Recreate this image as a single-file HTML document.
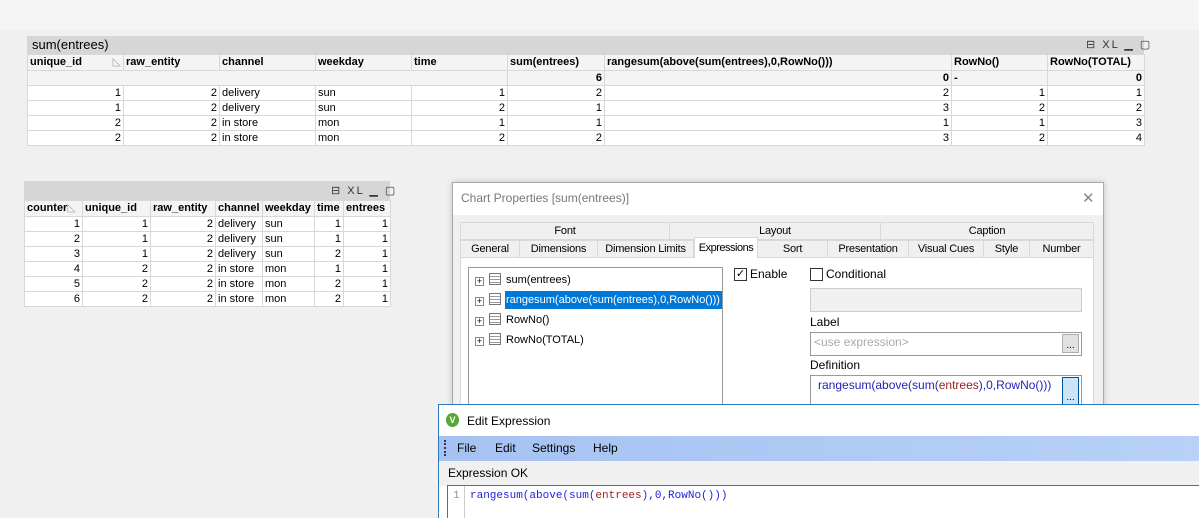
<!DOCTYPE html>
<html><head><style>
*{margin:0;padding:0;box-sizing:border-box}
body{width:1199px;height:518px;background:#f0f0f0;position:relative;overflow:hidden;font-family:"Liberation Sans",sans-serif;font-size:11px;color:#000}
.a{position:absolute}
table{border-collapse:collapse;position:absolute;table-layout:fixed;background:#fff}
td{border:1px solid #d8d8d8;height:15px;padding:0 2px;font-size:11px;white-space:nowrap;overflow:hidden;line-height:13px}
td.r{text-align:right}
tr.h td{font-weight:bold;background:#f4f4f4;height:16px}
tr.t td{background:#f4f4f4;font-weight:bold}
.cap{background:#d6d6d6}
.ic{font-size:11px;color:#333;letter-spacing:2px}
.tab{position:absolute;border:1px solid #d9d9d9;background:#f0f0f0;text-align:center;font-size:11px;line-height:17px;height:18px;color:#000;white-space:nowrap;overflow:hidden;letter-spacing:-0.2px}
.tree{font-size:11px;position:absolute;left:10px}
.pl{display:inline-block;width:9px;height:9px;border:1px solid #888;font-size:9px;line-height:7px;text-align:center;margin-right:5px;vertical-align:-1px;background:#fff}
.gi{display:inline-block;width:12px;height:12px;border:1px solid #777;background:repeating-linear-gradient(#fff 0 2px,#99a 2px 3px);margin-right:5px;vertical-align:-2px}
</style></head><body>
<div class="a" style="left:0;top:0;width:1199px;height:30px;background:#f5f5f5"></div>
<!-- top table -->
<div class="a cap" style="left:27px;top:36px;width:1117px;height:18px"></div>
<div class="a" style="left:32px;top:36px;font-size:13px;line-height:18px">sum(entrees)</div>
<div class="a ic" style="left:1086px;top:38px">⊟ XL ▁ ▢</div>
<table style="left:27px;top:54px;width:1118px">
<colgroup><col style="width:96px"><col style="width:96px"><col style="width:96px"><col style="width:96px"><col style="width:96px"><col style="width:97px"><col style="width:347px"><col style="width:96px"><col style="width:97px"></colgroup>
<tr class="h"><td>unique_id <span style="float:right;color:#aaa;font-weight:normal">◺</span></td><td>raw_entity</td><td>channel</td><td>weekday</td><td>time</td><td>sum(entrees)</td><td>rangesum(above(sum(entrees),0,RowNo()))</td><td>RowNo()</td><td>RowNo(TOTAL)</td></tr>
<tr class="t"><td colspan="5" style="border-right:1px solid #d8d8d8"></td><td class="r">6</td><td class="r">0</td><td>-</td><td class="r">0</td></tr>
<tr><td class="r">1</td><td class="r">2</td><td>delivery</td><td>sun</td><td class="r">1</td><td class="r">2</td><td class="r">2</td><td class="r">1</td><td class="r">1</td></tr>
<tr><td class="r">1</td><td class="r">2</td><td>delivery</td><td>sun</td><td class="r">2</td><td class="r">1</td><td class="r">3</td><td class="r">2</td><td class="r">2</td></tr>
<tr><td class="r">2</td><td class="r">2</td><td>in store</td><td>mon</td><td class="r">1</td><td class="r">1</td><td class="r">1</td><td class="r">1</td><td class="r">3</td></tr>
<tr><td class="r">2</td><td class="r">2</td><td>in store</td><td>mon</td><td class="r">2</td><td class="r">2</td><td class="r">3</td><td class="r">2</td><td class="r">4</td></tr>
</table>
<!-- second table -->
<div class="a cap" style="left:24px;top:181px;width:366px;height:19px"></div>
<div class="a ic" style="left:331px;top:184px">⊟ XL ▁ ▢</div>
<table style="left:24px;top:200px;width:366px">
<colgroup><col style="width:58px"><col style="width:68px"><col style="width:65px"><col style="width:47px"><col style="width:52px"><col style="width:29px"><col style="width:47px"></colgroup>
<tr class="h"><td>counter<span style="color:#aaa;font-weight:normal">◺</span></td><td>unique_id</td><td>raw_entity</td><td>channel</td><td>weekday</td><td>time</td><td>entrees</td></tr>
<tr><td class="r">1</td><td class="r">1</td><td class="r">2</td><td>delivery</td><td>sun</td><td class="r">1</td><td class="r">1</td></tr>
<tr><td class="r">2</td><td class="r">1</td><td class="r">2</td><td>delivery</td><td>sun</td><td class="r">1</td><td class="r">1</td></tr>
<tr><td class="r">3</td><td class="r">1</td><td class="r">2</td><td>delivery</td><td>sun</td><td class="r">2</td><td class="r">1</td></tr>
<tr><td class="r">4</td><td class="r">2</td><td class="r">2</td><td>in store</td><td>mon</td><td class="r">1</td><td class="r">1</td></tr>
<tr><td class="r">5</td><td class="r">2</td><td class="r">2</td><td>in store</td><td>mon</td><td class="r">2</td><td class="r">1</td></tr>
<tr><td class="r">6</td><td class="r">2</td><td class="r">2</td><td>in store</td><td>mon</td><td class="r">2</td><td class="r">1</td></tr>
</table>
<!-- chart properties dialog -->
<div class="a" style="left:452px;top:182px;width:652px;height:240px;background:#f0f0f0;border:1px solid #aaa;box-shadow:0 0 6px rgba(0,0,0,.2)"></div>
<div class="a" style="left:453px;top:183px;width:650px;height:32px;background:#fff"></div>
<div class="a" style="left:461px;top:190px;font-size:12px;color:#777;line-height:16px">Chart Properties [sum(entrees)]</div>
<div class="a" style="left:1082px;top:189px;font-size:15px;color:#888;font-weight:300">✕</div>
<div class="tab" style="left:460px;top:222px;width:210px">Font</div>
<div class="tab" style="left:669px;top:222px;width:212px">Layout</div>
<div class="tab" style="left:880px;top:222px;width:214px">Caption</div>
<div class="tab" style="left:460px;top:240px;width:60px">General</div>
<div class="tab" style="left:519px;top:240px;width:79px">Dimensions</div>
<div class="tab" style="left:597px;top:240px;width:97px">Dimension Limits</div>
<div class="tab" style="left:694px;top:237px;width:64px;height:22px;background:#fff;border-bottom:none;letter-spacing:-0.5px;line-height:21px">Expressions</div>
<div class="tab" style="left:757px;top:240px;width:71px">Sort</div>
<div class="tab" style="left:827px;top:240px;width:82px">Presentation</div>
<div class="tab" style="left:908px;top:240px;width:76px">Visual Cues</div>
<div class="tab" style="left:983px;top:240px;width:47px">Style</div>
<div class="tab" style="left:1029px;top:240px;width:65px">Number</div>
<div class="a" style="left:460px;top:258px;width:634px;height:160px;background:#fff;border:1px solid #d9d9d9;border-top:none"></div>
<div class="a" style="left:468px;top:267px;width:255px;height:150px;background:#fff;border:1px solid #999"></div>
<div class="tree" style="left:475px;top:272px;font-size:11px;line-height:16px"><span class="pl">+</span><span class="gi"></span>sum(entrees)</div>
<div class="a" style="left:505px;top:291px;width:217px;height:18px;background:#0078d7"></div>
<div class="tree" style="left:475px;top:292px;font-size:11px;line-height:16px"><span class="pl" style="color:#000">+</span><span class="gi"></span><span style="color:#fff">rangesum(above(sum(entrees),0,RowNo()))</span></div>
<div class="tree" style="left:475px;top:312px;font-size:11px;line-height:16px"><span class="pl">+</span><span class="gi"></span>RowNo()</div>
<div class="tree" style="left:475px;top:332px;font-size:11px;line-height:16px"><span class="pl">+</span><span class="gi"></span>RowNo(TOTAL)</div>
<div class="a" style="left:734px;top:268px;width:13px;height:13px;border:1px solid #333;background:#fff;font-size:11px;line-height:11px;text-align:center">✓</div>
<div class="a" style="left:750px;top:267px;font-size:12px;line-height:15px">Enable</div>
<div class="a" style="left:810px;top:268px;width:13px;height:13px;border:1px solid #333;background:#fff"></div>
<div class="a" style="left:826px;top:267px;font-size:12px;line-height:15px">Conditional</div>
<div class="a" style="left:810px;top:288px;width:272px;height:24px;background:#f0f0f0;border:1px solid #ccc"></div>
<div class="a" style="left:810px;top:315px;font-size:12px;line-height:15px">Label</div>
<div class="a" style="left:810px;top:332px;width:272px;height:24px;background:#fff;border:1px solid #999"></div>
<div class="a" style="left:814px;top:335px;font-size:12px;line-height:15px;color:#aaa">&lt;use expression&gt;</div>
<div class="a" style="left:1062px;top:334px;width:17px;height:19px;background:#e1e1e1;border:1px solid #adadad;font-size:10px;text-align:center;line-height:22px">...</div>
<div class="a" style="left:810px;top:358px;font-size:12px;line-height:15px">Definition</div>
<div class="a" style="left:810px;top:375px;width:272px;height:40px;background:#fff;border:1px solid #999"></div>
<div class="a" style="left:818px;top:378px;font-size:12px;line-height:15px;color:#22b"><span>rangesum(above(sum(</span><span style="color:#922">entrees</span>),0,RowNo()))</div>
<div class="a" style="left:1062px;top:377px;width:17px;height:30px;background:#cce4f7;border:1px solid #005499;font-size:10px;text-align:center;line-height:40px">...</div>
<!-- Edit expression -->
<div class="a" style="left:438px;top:404px;width:761px;height:114px;background:#fff;border-top:1px solid #2b79c2;border-left:1px solid #2b79c2"></div>
<div class="a" style="left:446px;top:413px;width:13px;height:14px;border-radius:50%;background:#56a734;color:#fff;font-size:9px;font-weight:bold;text-align:center;line-height:14px">V</div>
<div class="a" style="left:467px;top:413px;font-size:12px;line-height:16px">Edit Expression</div>
<div class="a" style="left:439px;top:436px;width:760px;height:25px;background:linear-gradient(90deg,#a6c2f1,#b7d1f7)"></div>
<div class="a" style="left:444px;top:440px;width:2px;height:16px;border-left:2px dotted #335"></div>
<div class="a" style="left:457px;top:441px;font-size:12px;line-height:15px">File</div>
<div class="a" style="left:495px;top:441px;font-size:12px;line-height:15px">Edit</div>
<div class="a" style="left:532px;top:441px;font-size:12px;line-height:15px">Settings</div>
<div class="a" style="left:593px;top:441px;font-size:12px;line-height:15px">Help</div>
<div class="a" style="left:439px;top:461px;width:760px;height:25px;background:#f0f0f0"></div>
<div class="a" style="left:448px;top:466px;font-size:12px;line-height:15px">Expression OK</div>
<div class="a" style="left:447px;top:485px;width:752px;height:33px;background:#fff;border:1px solid #2b79c2;border-right:none;border-bottom:none"></div>
<div class="a" style="left:464px;top:486px;width:1px;height:32px;background:#ccc"></div>
<div class="a" style="left:453px;top:489px;font-family:'Liberation Mono',monospace;font-size:11px;color:#999;line-height:14px">1</div>
<div class="a" style="left:470px;top:489px;font-family:'Liberation Mono',monospace;font-size:11px;color:#22d;line-height:14px">rangesum(above(sum(<span style="color:#922">entrees</span>),0,RowNo()))</div>
</body></html>
